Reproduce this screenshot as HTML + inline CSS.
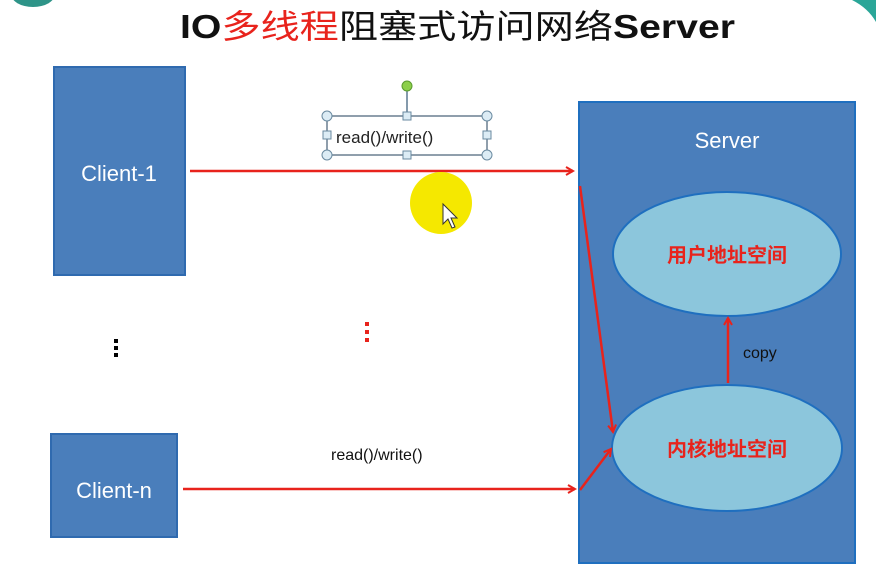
<!DOCTYPE html>
<html><head><meta charset="utf-8"><style>
html,body{margin:0;padding:0;background:#fff;width:876px;height:568px;overflow:hidden}
svg{display:block}
text{font-family:"Liberation Sans","Noto Sans CJK SC",sans-serif}
</style></head><body>
<svg width="876" height="568" viewBox="0 0 876 568" xmlns="http://www.w3.org/2000/svg">
<defs>
<marker id="ah" markerWidth="10" markerHeight="10" refX="8" refY="5" orient="auto" markerUnits="userSpaceOnUse">
<path d="M1,1 L8,5 L1,9" fill="none" stroke="#e8231c" stroke-width="2"/>
</marker>
</defs>
<ellipse cx="33" cy="-6" rx="22" ry="13" fill="#2e9488"/>
<path d="M852,0 Q868,8 876,22 L876,0 Z" fill="#2aa698"/>
<text x="180" y="38" textLength="555" lengthAdjust="spacingAndGlyphs" font-size="33" fill="#111"><tspan font-weight="bold">IO</tspan><tspan fill="#e8231c">多线程</tspan><tspan>阻塞式访问网络</tspan><tspan font-weight="bold">Server</tspan></text>

<rect x="54" y="67" width="131" height="208" fill="#4a7ebb" stroke="#2f6aaf" stroke-width="2"/>
<text x="119" y="181" text-anchor="middle" font-size="22" fill="#fff">Client-1</text>
<rect x="51" y="434" width="126" height="103" fill="#4a7ebb" stroke="#2f6aaf" stroke-width="2"/>
<text x="114" y="498" text-anchor="middle" font-size="22" fill="#fff">Client-n</text>

<rect x="114" y="339" width="4" height="4" fill="#000"/><rect x="114" y="346" width="4" height="4" fill="#000"/><rect x="114" y="353" width="4" height="4" fill="#000"/>
<rect x="365" y="322" width="4" height="4" fill="#e8231c"/><rect x="365" y="330" width="4" height="4" fill="#e8231c"/><rect x="365" y="338" width="4" height="4" fill="#e8231c"/>

<rect x="579" y="102" width="276" height="461" fill="#4a7ebb" stroke="#1f6fbf" stroke-width="2"/>
<text x="727" y="148" text-anchor="middle" font-size="22" fill="#fff">Server</text>
<ellipse cx="727" cy="254" rx="114" ry="62" fill="#8cc6dc" stroke="#1f6fbf" stroke-width="2"/>
<text x="727" y="262" text-anchor="middle" font-size="20" font-weight="bold" fill="#e8231c">用户地址空间</text>
<ellipse cx="727" cy="448" rx="115" ry="63" fill="#8cc6dc" stroke="#1f6fbf" stroke-width="2"/>
<text x="727" y="456" text-anchor="middle" font-size="20" font-weight="bold" fill="#e8231c">内核地址空间</text>
<line x1="728" y1="383" x2="728" y2="318" stroke="#e8231c" stroke-width="2.5" marker-end="url(#ah)"/>
<text x="743" y="358" font-size="16" fill="#111">copy</text>

<line x1="190" y1="171" x2="573" y2="171" stroke="#e8231c" stroke-width="2.5" marker-end="url(#ah)"/>
<line x1="183" y1="489" x2="575" y2="489" stroke="#e8231c" stroke-width="2.5" marker-end="url(#ah)"/>
<line x1="580" y1="186" x2="613" y2="432" stroke="#e8231c" stroke-width="2.5" marker-end="url(#ah)"/>
<line x1="580" y1="490" x2="611" y2="449" stroke="#e8231c" stroke-width="2.5" marker-end="url(#ah)"/>

<text x="331" y="460" font-size="16" fill="#111">read()/write()</text>

<line x1="407" y1="88" x2="407" y2="116" stroke="#5a7890" stroke-width="1.5"/>
<circle cx="407" cy="86" r="5" fill="#8ccf4a" stroke="#5a9a30"/>
<rect x="327" y="116" width="160" height="39" fill="#fff" stroke="#6a7f90" stroke-width="1.5"/>
<text x="336" y="143" font-size="17" fill="#222">read()/write()</text>
<g fill="#dcecf5" stroke="#6a8aa0" stroke-width="1">
<circle cx="327" cy="116" r="5"/><circle cx="487" cy="116" r="5"/><circle cx="327" cy="155" r="5"/><circle cx="487" cy="155" r="5"/>
<rect x="403" y="112" width="8" height="8"/><rect x="403" y="151" width="8" height="8"/><rect x="323" y="131" width="8" height="8"/><rect x="483" y="131" width="8" height="8"/>
</g>

<circle cx="441" cy="203" r="31" fill="#f5e800"/>
<path d="M443,204 L443,224 L448,219 L452,228 L455,227 L451,218 L457,218 Z" fill="#fff" stroke="#333" stroke-width="1"/>
</svg>
</body></html>
